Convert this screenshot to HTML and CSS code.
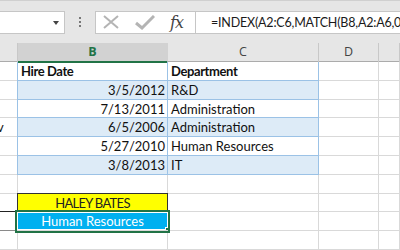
FILE: index.html
```html
<!DOCTYPE html>
<html>
<head>
    <title>INDEX MATCH lookup</title>
    <link rel="stylesheet" href="styles.css">
</head>
<body>
    <div class="toolbar">
        <div class="namebox"><span class="drop"></span></div>
        <div class="grip"><i></i><i></i><i></i></div>
        <div class="fx-buttons">
            <svg class="ico" width="18" height="14" viewBox="0 0 18 14">
                <path d="M2 1 L16 13 M16 1 L2 13" stroke="#b4b4b4" stroke-width="2" fill="none"/>
            </svg>
            <svg class="ico" width="20" height="15" viewBox="0 0 20 15">
                <path d="M1 8 L7 13 L19 1" stroke="#b4b4b4" stroke-width="3" fill="none"/>
            </svg>
            <span class="fx">fx</span>
        </div>
        <div class="formula">=INDEX(A2:C6,MATCH(B8,A2:A6,0),3)</div>
    </div>

    <div class="colheads">
        <div class="ch"></div>
        <div class="ch active">B</div>
        <div class="ch">C</div>
        <div class="ch">D</div>
        <div class="ch"></div>
    </div>

    <div class="sheet">
        <div class="row">
            <div class="cell"></div>
            <div class="cell tbl th">Hire Date</div>
            <div class="cell tbl th">Department</div>
            <div class="cell"></div>
            <div class="cell"></div>
        </div>
        <div class="row band">
            <div class="cell"></div>
            <div class="cell tbl num">3/5/2012</div>
            <div class="cell tbl">R&amp;D</div>
            <div class="cell"></div>
            <div class="cell"></div>
        </div>
        <div class="row">
            <div class="cell"></div>
            <div class="cell tbl num">7/13/2011</div>
            <div class="cell tbl">Administration</div>
            <div class="cell"></div>
            <div class="cell"></div>
        </div>
        <div class="row band">
            <div class="cell clip">v</div>
            <div class="cell tbl num">6/5/2006</div>
            <div class="cell tbl">Administration</div>
            <div class="cell"></div>
            <div class="cell"></div>
        </div>
        <div class="row">
            <div class="cell"></div>
            <div class="cell tbl num">5/27/2010</div>
            <div class="cell tbl">Human Resources</div>
            <div class="cell"></div>
            <div class="cell"></div>
        </div>
        <div class="row band">
            <div class="cell"></div>
            <div class="cell tbl num">3/8/2013</div>
            <div class="cell tbl">IT</div>
            <div class="cell"></div>
            <div class="cell"></div>
        </div>
        <div class="row">
            <div class="cell"></div>
            <div class="cell"></div>
            <div class="cell"></div>
            <div class="cell"></div>
            <div class="cell"></div>
        </div>
        <div class="row">
            <div class="cell dark-bottom"></div>
            <div class="cell lookup">HALEY BATES</div>
            <div class="cell"></div>
            <div class="cell"></div>
            <div class="cell"></div>
        </div>
        <div class="row">
            <div class="cell grey-bottom"></div>
            <div class="cell result selected">Human Resources</div>
            <div class="cell"></div>
            <div class="cell"></div>
            <div class="cell"></div>
        </div>
        <div class="row">
            <div class="cell"></div>
            <div class="cell"></div>
            <div class="cell"></div>
            <div class="cell"></div>
            <div class="cell"></div>
        </div>
    </div>
</body>
</html>
```

FILE: styles.css
```css
body { margin: 0; background: #fff; font-family: Lato, "Liberation Sans", sans-serif; overflow: hidden; }

.toolbar { display: flex; align-items: center; height: 43px; background: #e6e6e6; border-top: 1px solid #d0d0d0; box-sizing: border-box; }
.namebox { width: 65px; height: 23px; background: #fff; border: 1px solid #c6c6c6; border-left: none; box-sizing: border-box; position: relative; }
.drop { position: absolute; left: 53px; top: 9px; border-left: 3px solid transparent; border-right: 3px solid transparent; border-top: 4px solid #444; }
.grip { width: 30px; display: flex; flex-direction: column; align-items: center; gap: 2px; }
.grip i { width: 2px; height: 2px; background: #777; }
.fx-buttons { width: 101px; height: 23px; background: #fff; border: 1px solid #c6c6c6; box-sizing: border-box; display: flex; align-items: center; padding-left: 6px; gap: 15px; }
.fx { font-family: "DejaVu Serif", serif; font-style: italic; font-size: 16px; color: #444; letter-spacing: -1px; }
.formula { flex: 1; height: 23px; background: #fff; border: 1px solid #c6c6c6; border-left: none; border-right: none; box-sizing: border-box; padding-left: 15px; font-size: 12.5px; letter-spacing: -0.2px; line-height: 21px; color: #1a1a1a; white-space: nowrap; overflow: hidden; }

.colheads { display: grid; grid-template-columns: 18px 150px 151px 60px 1fr; height: 18px; background: #e6e6e6; border-bottom: 1px solid #ababab; }
.ch { border-right: 1px solid #c8c8c8; font-family: "Open Sans", sans-serif; font-size: 12.5px; color: #444; text-align: center; line-height: 18px; }
.ch.active { background: #d2d2d2; color: #217346; font-weight: bold; border-bottom: 2px solid #217346; border-right-color: #d2d2d2; }

.row { display: grid; grid-template-columns: 18px 150px 151px 60px 1fr; height: 18.8px; }
.cell { border-right: 1px solid #d9d9d9; border-bottom: 1px solid #d9d9d9; font-size: 13px; line-height: 19px; padding: 0 3px; color: #111; white-space: nowrap; overflow: hidden; }
.row .cell:first-child { padding: 0; }
.clip { text-indent: -3px; }
.tbl { border-color: #9bc2e6; }
.row .tbl:nth-child(2) { border-left: 1px solid #9bc2e6; margin-left: -1px; }
.band .tbl { background: #ddebf7; }
.th { font-weight: bold; letter-spacing: -0.4px; }
.num { text-align: right; padding-right: 2px; }

.dark-bottom { border-bottom-color: #222; }
.grey-bottom { border-bottom-color: #8a8a8a; }
.lookup { background: #ffff00; border: 1px solid #333; margin: -1px 0 0 -1px; text-align: center; color: #222; letter-spacing: -0.7px; }
.result { background: #00b0f0; color: #fff; text-align: center; }
.selected { position: relative; outline: 2px solid #217346; outline-offset: 0; box-shadow: inset 0 0 0 1px #fff; margin-left: -1px; border-right: none; }
.selected::after { content: ""; position: absolute; right: -4px; bottom: -4px; width: 5px; height: 5px; background: #217346; border: 1px solid #fff; }
```
